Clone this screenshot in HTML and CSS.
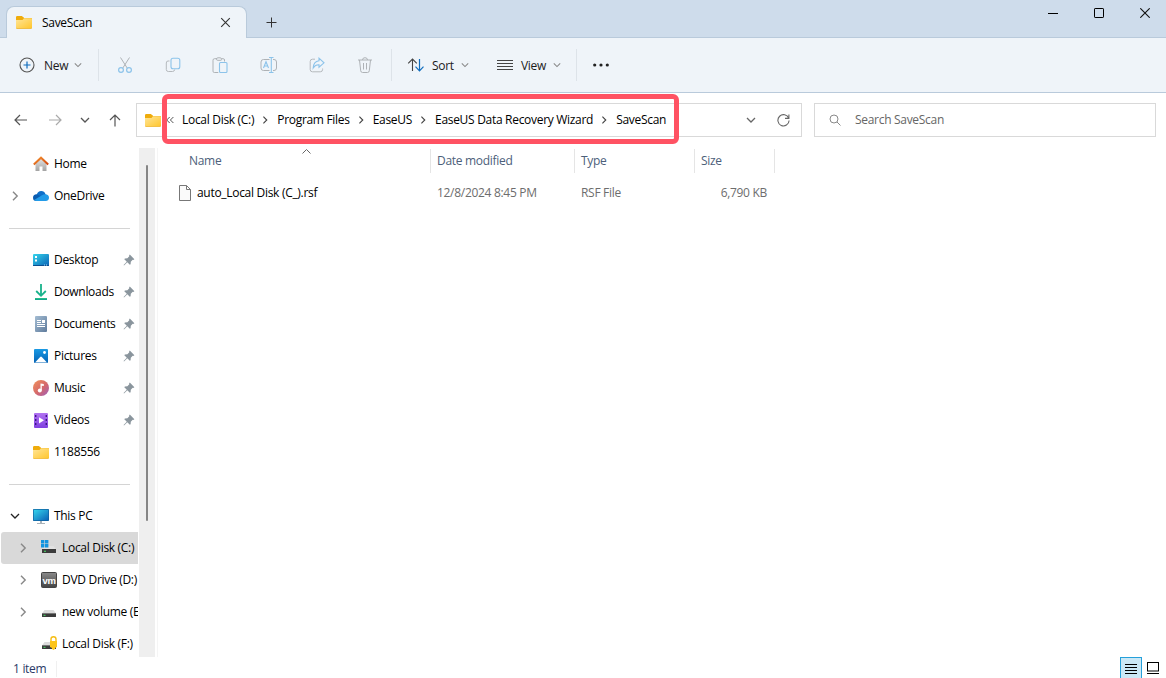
FILE: index.html
```html
<!DOCTYPE html>
<html lang="en">
<head>
    <meta charset="UTF-8">
    <title>SaveScan</title>
    <link rel="stylesheet" href="styles.css">
</head>

<body>

<!-- shared icons -->
<svg class="hidden" width="0" height="0">
    <defs>
        <linearGradient id="folder-fill" x1="0" y1="0" x2="1" y2="1">
            <stop offset="0" stop-color="#ffe69a"/><stop offset="1" stop-color="#ffc62e"/>
        </linearGradient>
        <linearGradient id="screen-fill" x1="0" y1="0" x2="1" y2="1">
            <stop offset="0" stop-color="#35d5ec"/><stop offset="1" stop-color="#0b62b6"/>
        </linearGradient>
        <linearGradient id="download-fill" x1="0" y1="0" x2="0" y2="1">
            <stop offset="0" stop-color="#2fc98a"/><stop offset="1" stop-color="#0a9a8c"/>
        </linearGradient>
        <linearGradient id="document-fill" x1="0" y1="0" x2="1" y2="1">
            <stop offset="0" stop-color="#a4bdd3"/><stop offset="1" stop-color="#5f7b9c"/>
        </linearGradient>
        <linearGradient id="picture-fill" x1="0" y1="0" x2="0" y2="1">
            <stop offset="0" stop-color="#1a9ae4"/><stop offset="1" stop-color="#0362b4"/>
        </linearGradient>
        <linearGradient id="music-fill" x1="0" y1="0" x2="1" y2="1">
            <stop offset="0" stop-color="#f2935a"/><stop offset="0.55" stop-color="#d4686c"/><stop offset="1" stop-color="#9b5fc0"/>
        </linearGradient>
        <linearGradient id="video-fill" x1="0" y1="0" x2="0" y2="1">
            <stop offset="0" stop-color="#b273f2"/><stop offset="1" stop-color="#7f3fe0"/>
        </linearGradient>
        <linearGradient id="house-fill" x1="0" y1="0" x2="0" y2="1">
            <stop offset="0" stop-color="#e4e4e4"/><stop offset="1" stop-color="#a3a3a3"/>
        </linearGradient>
        <linearGradient id="roof-fill" x1="0" y1="0" x2="1" y2="1">
            <stop offset="0" stop-color="#f5922e"/><stop offset="1" stop-color="#cf4510"/>
        </linearGradient>
        <linearGradient id="vm-fill" x1="0" y1="0" x2="0" y2="1">
            <stop offset="0" stop-color="#8a8a8a"/><stop offset="1" stop-color="#444"/>
        </linearGradient>
    </defs>
    <symbol id="folder" viewBox="0 0 16 16">
        <path d="M0 3.2Q0 2 1.2 2H6L7.8 4H0z" fill="#efac0c"/>
        <path d="M0 3h7l1 1h7.2q.8 0 .8.8v9q0 .9-.9.9H.9q-.9 0-.9-.9z" fill="#efac0c"/>
        <path d="M0 6h6.5L8 4.3h7.2q.8 0 .8.8V13.500q0 .6-.9.600H.9q-.9 0-.9-.6z" fill="url(#folder-fill)"/>
    </symbol>
    <symbol id="pin" viewBox="0 0 12 12">
        <path d="M6.800.6 11.400 5.200 10.300 5.900 9.700 5.800 7.800 7.700 7.600 10.200 6.800 10.700 4.300 8.200 1 11.400.6 11 3.800 7.700 1.300 5.200 1.900 4.400 4.400 4.200 6.300 2.300 6.100 1.500z" fill="#8a959d"/>
    </symbol>
    <symbol id="chevron-right" viewBox="0 0 10 10">
        <path d="M3 .8 7.200 5 3 9.200" fill="none" stroke="currentColor" stroke-width="1.400"/>
    </symbol>
    <symbol id="chevron-down" viewBox="0 0 10 10">
        <path d="M1 3 5 7 9 3" fill="none" stroke="currentColor" stroke-width="1.300"/>
    </symbol>
    <symbol id="drive" viewBox="0 0 16 16">
        <path d="M3.500 6h9L15 9.500H1z" fill="#dcdcdc"/>
        <path d="M1 9h14v3.500q0 .5-.5.5h-13Q1 13 1 12.500z" fill="#3b3b3b"/>
        <path d="M1 9h14v1H1z" fill="#777"/>
        <path d="M2.500 10.800h2v1h-2z" fill="#4be06a"/>
    </symbol>
</svg>

<div class="window">
    <div class="titlebar">
        <div class="tab">
            <svg class="icon"><use href="#folder"/></svg>
            <span class="tab-title">SaveScan</span>
            <svg class="tab-close" width="11" height="11" viewBox="0 0 11 11"><path d="M1.200 1.200 9.800 9.800M9.800 1.200 1.200 9.800" stroke="#333" stroke-width="1.100"/></svg>
        </div>
        <svg class="tab-new" width="11" height="11" viewBox="0 0 11 11"><path d="M5.500.500v10M.5 5.500h10" stroke="#333"/></svg>
        <div class="window-buttons">
            <svg width="10" height="10" viewBox="0 0 10 10"><path d="M0 5.500h10" stroke="#000"/></svg>
            <svg width="10" height="10" viewBox="0 0 10 10"><rect x=".5" y=".5" width="9" height="9" rx=".6" fill="none" stroke="#000"/></svg>
            <svg width="10" height="10" viewBox="0 0 10 10"><path d="M.3.3 9.700 9.700M9.700.3.3 9.700" stroke="#111" stroke-width="1.100"/></svg>
        </div>
    </div>

    <div class="toolbar">
        <div class="tool new">
            <svg width="16" height="16" viewBox="0 0 16 16" fill="none"><circle cx="8" cy="8" r="7" stroke="#555" stroke-width="1.100"/><path d="M8 4.500v7M4.500 8h7" stroke="#0f6cbd" stroke-width="1.200"/></svg>
            <span>New</span>
            <svg class="caret"><use href="#chevron-down"/></svg>
        </div>
        <div class="tool-icons">
            <svg width="16" height="16" viewBox="0 0 16 16" fill="none"><path d="M3.500.5 10.200 11M12.500.5 5.800 11" stroke="#aeb2b6"/><circle cx="4" cy="13" r="2.400" stroke="#8cc3ea" stroke-width="1.200"/><circle cx="12" cy="13" r="2.400" stroke="#8cc3ea" stroke-width="1.200"/></svg>
            <svg width="16" height="16" viewBox="0 0 16 16" fill="none"><path d="M4.500 4H3Q1.300 4 1.300 6v6.500q0 2 2 2h4.200q2 0 2.200-2" stroke="#b5b9bd"/><rect x="6" y="1.200" width="8.800" height="10.500" rx="2" stroke="#8cc3ea" stroke-width="1.100"/></svg>
            <svg width="16" height="16" viewBox="0 0 16 16" fill="none"><path d="M5 1.700H2.500Q1 1.700 1 3.200v11q0 1.300 1.300 1.300h4M9.500 1.700h1.700q1.300 0 1.300 1.300v1.500M4.500 2.300q0-1.500 1.300-1.500h2.400q1.300 0 1.300 1.500T8.200 3.300H5.800q-1.300 0-1.300-1z" stroke="#aeb2b6"/><rect x="7.500" y="5.500" width="7.500" height="10" rx="1" stroke="#8cc3ea" stroke-width="1.100"/></svg>
            <svg width="18" height="16" viewBox="0 0 18 16" fill="none"><path d="M9.500 2.500H3.500Q1 2.500 1 5v6q0 2.500 2.500 2.500h6M13 2.500h1q2.500 0 2.500 2.500v6q0 2.500-2.500 2.500h-1" stroke="#aeb2b6"/><path d="M3.500 11 6 4.800 8.500 11M4.300 9h3.400M9 .5h4.500M9 15.500h4.500M11.300.5v15" stroke="#8cc3ea" stroke-width="1.100"/></svg>
            <svg width="16" height="16" viewBox="0 0 16 16" fill="none"><path d="M6 2.200H3.500Q1.200 2.200 1.200 4.500v8q0 2.300 2.300 2.300h7.800q2.300 0 2.300-2.300v-1" stroke="#b5b9bd"/><path d="M10 1.200 15 5.800 10 10.200V7.800Q6.500 7.500 4.200 11 4.500 4.500 10 3.800z" stroke="#8cc3ea" stroke-width="1.100"/></svg>
            <svg width="16" height="16" viewBox="0 0 16 16" fill="none"><path d="M1 3h14M5.500 3Q5.500.7 8 .7T10.500 3M2.500 3l1.200 10.700Q3.900 15.500 5.500 15.500h5q1.600 0 1.800-1.800L13.500 3M6.500 6v6.500M9.500 6v6.500" stroke="#aeb2b6"/></svg>
        </div>
        <div class="tool sort">
            <svg width="18" height="16" viewBox="0 0 18 16" fill="none"><path d="M5.500 14V2.200M1.200 6.300 5.500 2l4.300 4.300" stroke="#444" stroke-width="1.100"/><path d="M12.500 2v11.700M8.500 9.700l4 4.100 4-4.100" stroke="#0f6cbd" stroke-width="1.200"/></svg>
            <span>Sort</span>
            <svg class="caret"><use href="#chevron-down"/></svg>
        </div>
        <div class="tool view">
            <svg width="16" height="12" viewBox="0 0 16 12"><path d="M0 1.500h16M0 4.500h16M0 7.500h16M0 10.500h16" stroke="#444"/></svg>
            <span>View</span>
            <svg class="caret"><use href="#chevron-down"/></svg>
        </div>
        <div class="tool more">
            <svg width="16" height="4" viewBox="0 0 16 4" fill="#222"><circle cx="1.700" cy="2" r="1.600"/><circle cx="8" cy="2" r="1.600"/><circle cx="14.300" cy="2" r="1.600"/></svg>
        </div>
    </div>

    <div class="address-row">
        <div class="nav">
            <svg width="13" height="12" viewBox="0 0 13 12" fill="none" stroke="#555" stroke-width="1.200"><path d="M13 6H1M6 1 1 6l5 5"/></svg>
            <svg width="13" height="12" viewBox="0 0 13 12" fill="none" stroke="#aaa" stroke-width="1.200"><path d="M0 6h12M7 1l5 5-5 5"/></svg>
            <svg width="10" height="10" class="nav-down"><use href="#chevron-down"/></svg>
            <svg width="12" height="13" viewBox="0 0 12 13" fill="none" stroke="#555" stroke-width="1.200"><path d="M6 12.500V1M1 6l5-5 5 5"/></svg>
        </div>
        <div class="address">
            <svg class="icon"><use href="#folder"/></svg>
            <svg class="overflow" width="8" height="8" viewBox="0 0 8 8" fill="none" stroke="#555"><path d="M3.700 1 .7 4l3 3M7.400 1l-3 3 3 3"/></svg>
            <div class="crumbs">
                <span class="crumb">Local Disk (C:)</span>
                <svg class="sep"><use href="#chevron-right"/></svg>
                <span class="crumb">Program Files</span>
                <svg class="sep"><use href="#chevron-right"/></svg>
                <span class="crumb">EaseUS</span>
                <svg class="sep"><use href="#chevron-right"/></svg>
                <span class="crumb wide">EaseUS Data Recovery Wizard</span>
                <svg class="sep"><use href="#chevron-right"/></svg>
                <span class="crumb">SaveScan</span>
            </div>
            <svg class="history" width="10" height="10"><use href="#chevron-down"/></svg>
            <svg class="refresh" width="13" height="13" viewBox="0 0 13 13" fill="none" stroke="#666" stroke-width="1.100"><path d="M11.700 4.200A5.600 5.600 0 1 0 12.100 6.500M11.900.5v3.900H8"/></svg>
            <div class="highlight"></div>
        </div>
        <div class="search">
            <svg width="12" height="12" viewBox="0 0 12 12" fill="none" stroke="#8a8a8a"><circle cx="5" cy="5" r="4"/><path d="M8 8l3.500 3.500"/></svg>
            <span>Search SaveScan</span>
        </div>
    </div>

    <div class="main">
        <div class="sidebar">
            <div class="tree">
                <div class="item">
                    <svg class="icon" viewBox="0 0 16 16"><path d="M2.500 7.500 8 2.500l5.500 5V15h-4v-4.500h-3V15h-4z" fill="url(#house-fill)"/><path d="M.8 8.500 8 1.700l7.200 6.800" fill="none" stroke="url(#roof-fill)" stroke-width="2"/></svg>
                    <span>Home</span>
                </div>
                <div class="item">
                    <svg class="expand"><use href="#chevron-right"/></svg>
                    <svg class="icon" viewBox="0 0 16 16"><path d="M3.800 6.500Q4.800 3 8.200 3q3.200 0 4.300 3.200l-2 5.800H4z" fill="#0f6fc9"/><path d="M3.700 6.300Q0 6.500 0 9.800 0 13 3.500 13l6-4z" fill="#0a5cb0"/><path d="M12.200 6.300q3.800.4 3.800 3.500T12.700 13H3.500Q2 13 1.100 12L9 7.300q1.500-1 3.200-1z" fill="#239be8"/></svg>
                    <span>OneDrive</span>
                </div>
                <div class="divider"></div>
                <div class="item">
                    <svg class="icon" viewBox="0 0 16 16"><rect y="2" width="16" height="12" rx="1" fill="url(#screen-fill)"/><path d="M2 4h2v2H2zM2 7.500h2v2H2z" fill="#fff"/><path d="M0 13h16v.5q0 .5-.5.5H.5Q0 14 0 13.500z" fill="#0c4f91"/><path d="M11 12.500h1v1h-1zM13 12.500h1v1h-1z" fill="#9cdcf8"/></svg>
                    <span>Desktop</span>
                    <svg class="pin"><use href="#pin"/></svg>
                </div>
                <div class="item">
                    <svg class="icon" viewBox="0 0 16 16"><path d="M8 0v11M3.200 7 8 11.800 12.800 7" fill="none" stroke="#18b28b" stroke-width="1.800"/><path d="M2 14h12v2H2z" fill="url(#download-fill)"/></svg>
                    <span>Downloads</span>
                    <svg class="pin"><use href="#pin"/></svg>
                </div>
                <div class="item">
                    <svg class="icon" viewBox="0 0 16 16"><rect x="2" width="12" height="16" rx="1" fill="url(#document-fill)"/><path d="M4 4.500h4M4 6.500h4M4 8.500h8M4 10.500h8" stroke="#fff"/><path d="M9 4h3v3H9z" fill="#fff"/></svg>
                    <span>Documents</span>
                    <svg class="pin"><use href="#pin"/></svg>
                </div>
                <div class="item">
                    <svg class="icon" viewBox="0 0 16 16"><rect x="1" y="1" width="14" height="14" rx="1" fill="url(#picture-fill)"/><path d="M2 14.500 7.200 9q.8-.8 1.600 0l5.200 5.500z" fill="#fff"/><circle cx="11.500" cy="4.500" r="1.400" fill="#fff"/></svg>
                    <span>Pictures</span>
                    <svg class="pin"><use href="#pin"/></svg>
                </div>
                <div class="item">
                    <svg class="icon" viewBox="0 0 16 16"><circle cx="8" cy="8" r="8" fill="url(#music-fill)"/><circle cx="6.800" cy="10.500" r="2" fill="#fff"/><path d="M7.500 10.500V3.500L10.800 4v2L8.800 5.700v4.800z" fill="#fff"/></svg>
                    <span>Music</span>
                    <svg class="pin"><use href="#pin"/></svg>
                </div>
                <div class="item">
                    <svg class="icon" viewBox="0 0 16 16"><rect x="1" y="1" width="14" height="15" rx="1" fill="url(#video-fill)"/><path d="M2.700 3v11M13.300 3v11" stroke="#3d1686" stroke-width="1.400" stroke-dasharray="2 2"/><path d="M6 5.200 11 8.300 6 11.400z" fill="#fff"/></svg>
                    <span>Videos</span>
                    <svg class="pin"><use href="#pin"/></svg>
                </div>
                <div class="item">
                    <svg class="icon"><use href="#folder"/></svg>
                    <span>1188556</span>
                </div>
                <div class="divider"></div>
                <div class="item">
                    <svg class="expand open"><use href="#chevron-down"/></svg>
                    <svg class="icon" viewBox="0 0 16 16"><rect y="1" width="16" height="12" rx=".8" fill="#0e5f9f"/><rect x=".7" y="1.700" width="14.600" height="10.600" fill="url(#screen-fill)"/><path d="M7 13h2v2h3v1H4v-1h3z" fill="#a9b3ba"/></svg>
                    <span>This PC</span>
                </div>
                <div class="item child selected">
                    <svg class="expand"><use href="#chevron-right"/></svg>
                    <svg class="icon" viewBox="0 0 16 16"><path d="M4 6h8.500l2.500 3.500H1z" fill="#e2e2e2"/><path d="M1 9h14v4H1z" fill="#3b3b3b"/><path d="M3 10.800h2v1H3z" fill="#4be06a"/><path d="M0 0h3.400v3.400H0zM4 0h3.400v3.400H4zM0 4h3.400v3.400H0zM4 4h3.400v3.400H4z" fill="#1194e0"/></svg>
                    <span>Local Disk (C:)</span>
                </div>
                <div class="item child">
                    <svg class="expand"><use href="#chevron-right"/></svg>
                    <svg class="icon" viewBox="0 0 16 16"><rect x=".5" y=".5" width="15" height="15" rx="1" fill="url(#vm-fill)" stroke="#444"/><text class="vm-text" x="8" y="11.500">vm</text></svg>
                    <span>DVD Drive (D:)</span>
                </div>
                <div class="item child">
                    <svg class="expand"><use href="#chevron-right"/></svg>
                    <svg class="icon"><use href="#drive"/></svg>
                    <span>new volume (E:)</span>
                </div>
                <div class="item child">
                    <svg class="icon" viewBox="0 0 16 16"><use href="#drive" width="16" height="16"/><path d="M10 6V3q0-2.200 2.500-2.200T15 3v3" fill="none" stroke="#f5bd13" stroke-width="1.400"/><path d="M9 5h7v6l-2 1v1l-1.500 1L11 13v-1l-2-1z" fill="#fcc419"/></svg>
                    <span>Local Disk (F:)</span>
                </div>
            </div>
            <div class="scrollbar"><div class="thumb"></div></div>
        </div>

        <div class="files">
            <div class="file-grid head">
                <span class="name">Name
                    <svg class="sort-mark" width="9" height="5" viewBox="0 0 9 5" fill="none" stroke="#666"><path d="M.5 4.500l4-4 4 4"/></svg>
                </span>
                <span>Date modified</span>
                <span>Type</span>
                <span>Size</span>
            </div>
            <div class="file-grid file">
                <span class="name">
                    <svg width="12" height="16" viewBox="0 0 12 16" fill="#fafafa" stroke="#777"><path d="M.5.5h7l4 4v11H.5zM7.500.5v4h4"/></svg>
                    auto_Local Disk (C_).rsf
                </span>
                <span class="date">12/8/2024 8:45 PM</span>
                <span>RSF File</span>
                <span class="size">6,790 KB</span>
            </div>
        </div>
    </div>

    <div class="statusbar">
        <span class="count">1 item</span>
        <div class="view-buttons">
            <div class="view-button active"><svg width="12" height="11" viewBox="0 0 12 11"><path d="M0 .5h12M0 3.500h12M0 6.500h12M0 9.500h12" stroke="#000"/></svg></div>
            <div class="view-button"><svg width="12" height="12" viewBox="0 0 12 12"><rect x=".5" y=".5" width="11" height="8.500" fill="#fff" stroke="#000"/><path d="M0 11.500h12" stroke="#000"/></svg></div>
        </div>
    </div>
</div>

</body>
</html>
```

FILE: styles.css
```css
:root {
    --titlebar-color: #cedceb;
    --toolbar-color: #eff4f9;
    --edge-color: #b9cadb;
    --box-border-color: #d9d9d9;
    --column-text-color: #4c607a;
    --highlight-color: #ff5263;
}

* {
    box-sizing: border-box;
}

body {
    margin: 0;
    background-color: #ffffff;
    color: #000000;
    font-family: "Open Sans", "Noto Sans", sans-serif;
    font-size: 12px;
    letter-spacing: -0.3px;
    line-height: 16px;
    white-space: nowrap;
}
svg {
    display: block;
    flex: none;
}
.hidden {
    position: absolute;
}
.icon {
    width: 16px;
    height: 16px;
}
.window {
    height: 678px;
    display: grid;
    grid-template-rows: 38px 55px 55px 509px 1fr;
    overflow: hidden;
}

/* title bar */
.titlebar {
    display: flex;
    background-color: var(--titlebar-color);
    border-bottom: 1px solid var(--edge-color);
    padding-left: 6px;
}
.tab {
    display: flex;
    align-items: center;
    width: 241px;
    height: 32px;
    margin-top: 6px;
    padding: 0 15px 1px 9px;
    background-color: var(--toolbar-color);
    border: 1px solid var(--edge-color);
    border-bottom: none;
    border-radius: 8px 8px 0 0;
}
.tab-title {
    flex: 1;
    margin-left: 10px;
    padding-top: 1px;
    font-weight: 500;
}
.tab-new {
    margin: 17px 0 0 19px;
}
.window-buttons {
    display: flex;
    gap: 36px;
    margin: 8px 16px 0 auto;
}

/* toolbar */
.toolbar {
    display: flex;
    align-items: center;
    background-color: var(--toolbar-color);
    border-bottom: 1px solid var(--edge-color);
    color: #1b1b1b;
}
.tool {
    display: flex;
    align-items: center;
    height: 32px;
}
.tool span {
    margin-top: 2px;
}
.caret {
    width: 8px;
    height: 8px;
    color: #888888;
}
.new {
    width: 99px;
    padding-left: 19px;
    border-right: 1px solid #dde3e9;
}
.new span {
    width: 30px;
    margin-left: 9px;
}
.tool-icons {
    display: flex;
    justify-content: space-between;
    width: 293px;
    padding: 0 18px;
    border-right: 1px solid #dde3e9;
    height: 32px;
    align-items: center;
}
.sort {
    padding-left: 15px;
}
.sort span {
    width: 29px;
    margin-left: 7px;
}
.view {
    width: 108px;
    padding-left: 28px;
    border-right: 1px solid #dde3e9;
}
.view span {
    width: 32px;
    margin-left: 8px;
}
.more {
    padding-left: 16px;
}

/* address bar */
.address-row {
    display: flex;
    padding-top: 10px;
}
.nav {
    display: flex;
    align-items: center;
    width: 136px;
    height: 34px;
    padding-left: 14px;
}
.nav svg + svg {
    margin-left: 22px;
}
.nav svg.nav-down {
    margin-left: 18px;
    color: #555555;
}
.nav svg.nav-down + svg {
    margin-left: 19px;
}
.address {
    position: relative;
    display: flex;
    align-items: center;
    width: 666px;
    height: 34px;
    padding-left: 8px;
    border: 1px solid var(--box-border-color);
}
.overflow {
    margin-left: 5px;
}
.crumbs {
    display: flex;
    flex: 1;
    align-items: center;
    margin-left: 8px;
}
.sep {
    width: 8px;
    height: 8px;
    margin: 0 8px 0 7px;
    color: #444444;
}
.history {
    color: #666666;
}
.refresh {
    margin: 0 11px 0 21px;
}
.highlight {
    position: absolute;
    left: 25px;
    top: -10px;
    width: 517px;
    height: 50px;
    border: 5px solid var(--highlight-color);
    border-radius: 6px;
}
.search {
    display: flex;
    align-items: center;
    width: 342px;
    height: 34px;
    margin-left: 12px;
    padding-left: 14px;
    border: 1px solid var(--box-border-color);
    color: #666666;
}
.search span {
    margin-left: 14px;
}

/* navigation pane */
.main {
    display: flex;
}
.sidebar {
    display: flex;
    width: 158px;
    height: 509px;
    border-right: 1px solid #f5f5f5;
}
.tree {
    width: 138px;
    overflow: hidden;
}
.item {
    display: flex;
    align-items: center;
    height: 32px;
    padding-left: 33px;
    position: relative;
}
.item span {
    margin-left: 5px;
}
.item .expand {
    width: 10px;
    height: 10px;
    margin-left: -23px;
    margin-right: 13px;
    color: #888888;
}
.item .expand.open {
    color: #222222;
}
.item.child {
    padding-left: 41px;
}
.selected {
    margin-left: 1px;
    border-radius: 3px 0 0 3px;
    background-color: #d9d9d9;
}
.item.selected {
    padding-left: 40px;
}
.pin {
    width: 12px;
    height: 12px;
    margin: 0 3px 0 auto;
}
.vm-text {
    font-family: "Liberation Sans", sans-serif;
    font-size: 9.5px;
    font-weight: bold;
    fill: #ffffff;
    text-anchor: middle;
}
.divider {
    height: 1px;
    margin: 16px 8px 15px 9px;
    background-color: #d4d4d4;
}
.scrollbar {
    width: 16px;
    margin-left: 1px;
    padding: 17px 0 0 7px;
    background-color: #efefef;
}
.thumb {
    width: 2px;
    height: 356px;
    border-radius: 1px;
    background-color: #858585;
}

/* file list */
.files {
    padding: 1px 0 0 21px;
}
.file-grid {
    display: grid;
    grid-template-columns: 252px 144px 120px 80px;
    align-items: center;
}
.file-grid span {
    padding-left: 6px;
}
.head span {
    height: 24px;
    line-height: 24px;
    border-right: 1px solid #e5e5e5;
    color: var(--column-text-color);
}
.head .name {
    position: relative;
    padding-left: 10px;
}
.sort-mark {
    position: absolute;
    left: 123px;
    top: 0;
}
.file {
    height: 24px;
    margin-top: 8px;
    color: #6d6d6d;
}
.file .name {
    display: flex;
    align-items: center;
    gap: 6px;
    padding-left: 0;
    color: #000000;
}
.file .size {
    padding-right: 8px;
    text-align: right;
}

/* status bar */
.statusbar {
    display: flex;
    justify-content: space-between;
    color: #2b3a67;
}
.count {
    width: 57px;
    height: 16px;
    margin-top: 4px;
    padding-left: 13px;
    border-right: 1px solid #f0f0f0;
}
.view-buttons {
    display: flex;
    margin-right: 2px;
}
.view-button {
    display: flex;
    justify-content: center;
    width: 22px;
    padding-top: 5px;
}
.view-button.active {
    padding-top: 6px;
    border: 1px solid #26a0da;
    border-bottom: none;
    background-color: #cbe8f6;
}
```
